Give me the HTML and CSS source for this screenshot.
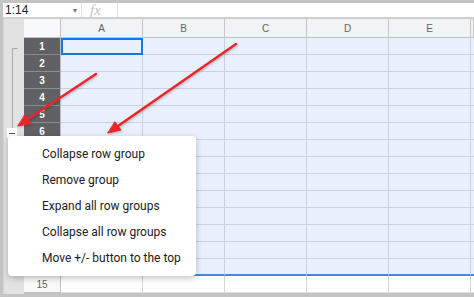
FILE: index.html
```html
<!DOCTYPE html>
<html lang="en">
<head>
    <meta charset="UTF-8">
    <title>Row groups menu</title>
    <link rel="stylesheet" href="styles.css">
</head>
<body>
<div class="app">

    <!-- Formula bar -->
    <div class="formula-bar">
        <div class="name-box">
            <span>1:14</span>
            <span class="caret">&#9662;</span>
        </div>
        <div class="fx">fx</div>
        <div class="formula-input"></div>
    </div>

    <!-- Sheet -->
    <div class="sheet">
        <div class="gutter"></div>
        <div class="grid" id="grid">
            <div class="corner"></div>
            <div class="col-head">A</div>
            <div class="col-head">B</div>
            <div class="col-head">C</div>
            <div class="col-head">D</div>
            <div class="col-head">E</div>
            <div class="col-head col-rest"></div>
        </div>
    </div>

    <!-- Group bracket and +/- button -->
    <div class="group-line"></div>
    <div class="group-dot"></div>
    <div class="toggle-btn"><span></span></div>

    <!-- Context menu -->
    <ul class="menu">
        <li>Collapse row group</li>
        <li>Remove group</li>
        <li>Expand all row groups</li>
        <li>Collapse all row groups</li>
        <li>Move +/- button to the top</li>
    </ul>

    <!-- Annotation arrows -->
    <svg class="arrows" width="474" height="297" viewBox="0 0 474 297">
        <defs>
            <filter id="soft" x="-10%" y="-10%" width="120%" height="120%">
                <feDropShadow dx="1" dy="1" stdDeviation="1" flood-color="#000" flood-opacity="0.25"/>
            </filter>
        </defs>
        <g filter="url(#soft)" stroke="#e8262b" fill="#e8262b" stroke-linecap="round" stroke-linejoin="round">
            <line x1="96" y1="74" x2="28" y2="119" stroke-width="2.5"/>
            <polygon points="18,126 31,123.5 25,115" stroke-width="1"/>
            <line x1="236" y1="44" x2="118" y2="126" stroke-width="2.5"/>
            <polygon points="108,133 121,130 115,122" stroke-width="1"/>
        </g>
    </svg>
</div>

<script>
    // Build rows 1-15: rows 1-14 are in the selected group
    const grid = document.getElementById('grid');
    for (let r = 1; r <= 15; r++) {
        const selected = r <= 14;
        let html = `<div class="row-head ${selected ? 'sel' : ''}">${r}</div>`;
        for (let c = 0; c < 5; c++) {
            let cls = 'cell' + (selected ? ' sel' : '');
            if (r === 1 && c === 0) cls += ' active';
            if (r === 14) cls += ' last';
            html += `<div class="${cls}"></div>`;
        }
        html += `<div class="cell cell-rest ${selected ? 'sel' : ''}${r === 14 ? ' last' : ''}"></div>`;
        grid.innerHTML += html;
    }
</script>
</body>
</html>
```

FILE: styles.css
```css
/* General */
* {
    box-sizing: border-box;
}
body {
    margin: 0;
    width: 474px;
    height: 297px;
    overflow: hidden;
    background-color: #c4c4c4;
    font-family: 'Liberation Sans', Arial, sans-serif;
}
.app {
    position: relative;
    width: 474px;
    height: 297px;
    padding: 3px 0 0 3px;
}

/* Formula bar */
.formula-bar {
    display: flex;
    height: 16px;
    background: white;
    border-bottom: 2px solid #cfcfcf;
}
.name-box {
    width: 79px;
    display: flex;
    justify-content: space-between;
    align-items: center;
    padding: 0 4px 0 2px;
    font-size: 12px;
    color: #222;
    border-right: 1px solid #e3e3e3;
}
.caret {
    font-size: 8px;
    color: #777;
}
.fx {
    width: 36px;
    padding-left: 8px;
    font-family: 'Liberation Serif', serif;
    font-style: italic;
    font-size: 15px;
    line-height: 15px;
    color: #c2c2c2;
    border-right: 1px solid #e3e3e3;
}
.formula-input {
    flex: 1;
}

/* Sheet */
.sheet {
    display: flex;
}
.gutter {
    width: 21px;
    height: 275px;
    background: #e2e2e2;
    border-left: 1px solid #d4d4d4;
}
.grid {
    display: grid;
    grid-template-columns: 37px repeat(5, 82px) 3px;
    grid-template-rows: 19px repeat(15, 17px);
}
.corner {
    background: #f8f9fa;
    border-right: 1px solid #c0c0c0;
    border-bottom: 1px solid #c0c0c0;
}
.col-head {
    background: #f1f3f4;
    color: #5f6368;
    font-size: 10px;
    display: flex;
    align-items: center;
    justify-content: center;
    border-right: 1px solid #c6c6c6;
    border-bottom: 1px solid #c0c0c0;
}
.row-head {
    background: #f8f9fa;
    color: #5f6368;
    font-size: 10px;
    display: flex;
    align-items: center;
    justify-content: center;
    border-right: 1px solid #c0c0c0;
    border-bottom: 1px solid #c0c0c0;
}
.row-head.sel {
    background: #5f6164;
    color: white;
    font-weight: bold;
    border-bottom-color: #8a8c8f;
}
.cell {
    background: white;
    border-right: 1px solid #d6d6d6;
    border-bottom: 1px solid #e0e0e0;
}
.cell.sel {
    background: #e8f0fe;
    border-right-color: #c9d1dd;
    border-bottom-color: #c9d1dd;
}
.cell.last {
    border-bottom: 2px solid #4a86d8;
}
.cell.active {
    border: 2px solid #1a73e8;
}
.cell-rest {
    border-right: none;
}

/* Group bracket */
.group-line {
    position: absolute;
    left: 12px;
    top: 48px;
    width: 6px;
    height: 222px;
    border-left: 1px solid #a8a8a8;
    border-top: 1px solid #a8a8a8;
}
.group-dot {
    position: absolute;
    left: 9px;
    top: 269px;
    width: 1px;
    height: 3px;
    background: #777;
}
.toggle-btn {
    position: absolute;
    left: 7px;
    top: 128px;
    width: 10px;
    height: 10px;
    background: white;
    display: flex;
    align-items: center;
    justify-content: center;
}
.toggle-btn span {
    width: 6px;
    height: 1px;
    background: #555;
}

/* Context menu */
.menu {
    position: absolute;
    left: 8px;
    top: 136px;
    width: 188px;
    margin: 0;
    padding: 5px 0;
    list-style: none;
    background: white;
    border-radius: 4px;
    box-shadow: 0 2px 6px rgba(0, 0, 0, 0.25);
    font-family: Roboto, 'Liberation Sans', sans-serif;
    font-size: 12px;
    color: #202124;
}
.menu li {
    height: 26px;
    line-height: 26px;
    padding-left: 34px;
    white-space: nowrap;
}

/* Arrows */
.arrows {
    position: absolute;
    left: 0;
    top: 0;
    pointer-events: none;
}
```
